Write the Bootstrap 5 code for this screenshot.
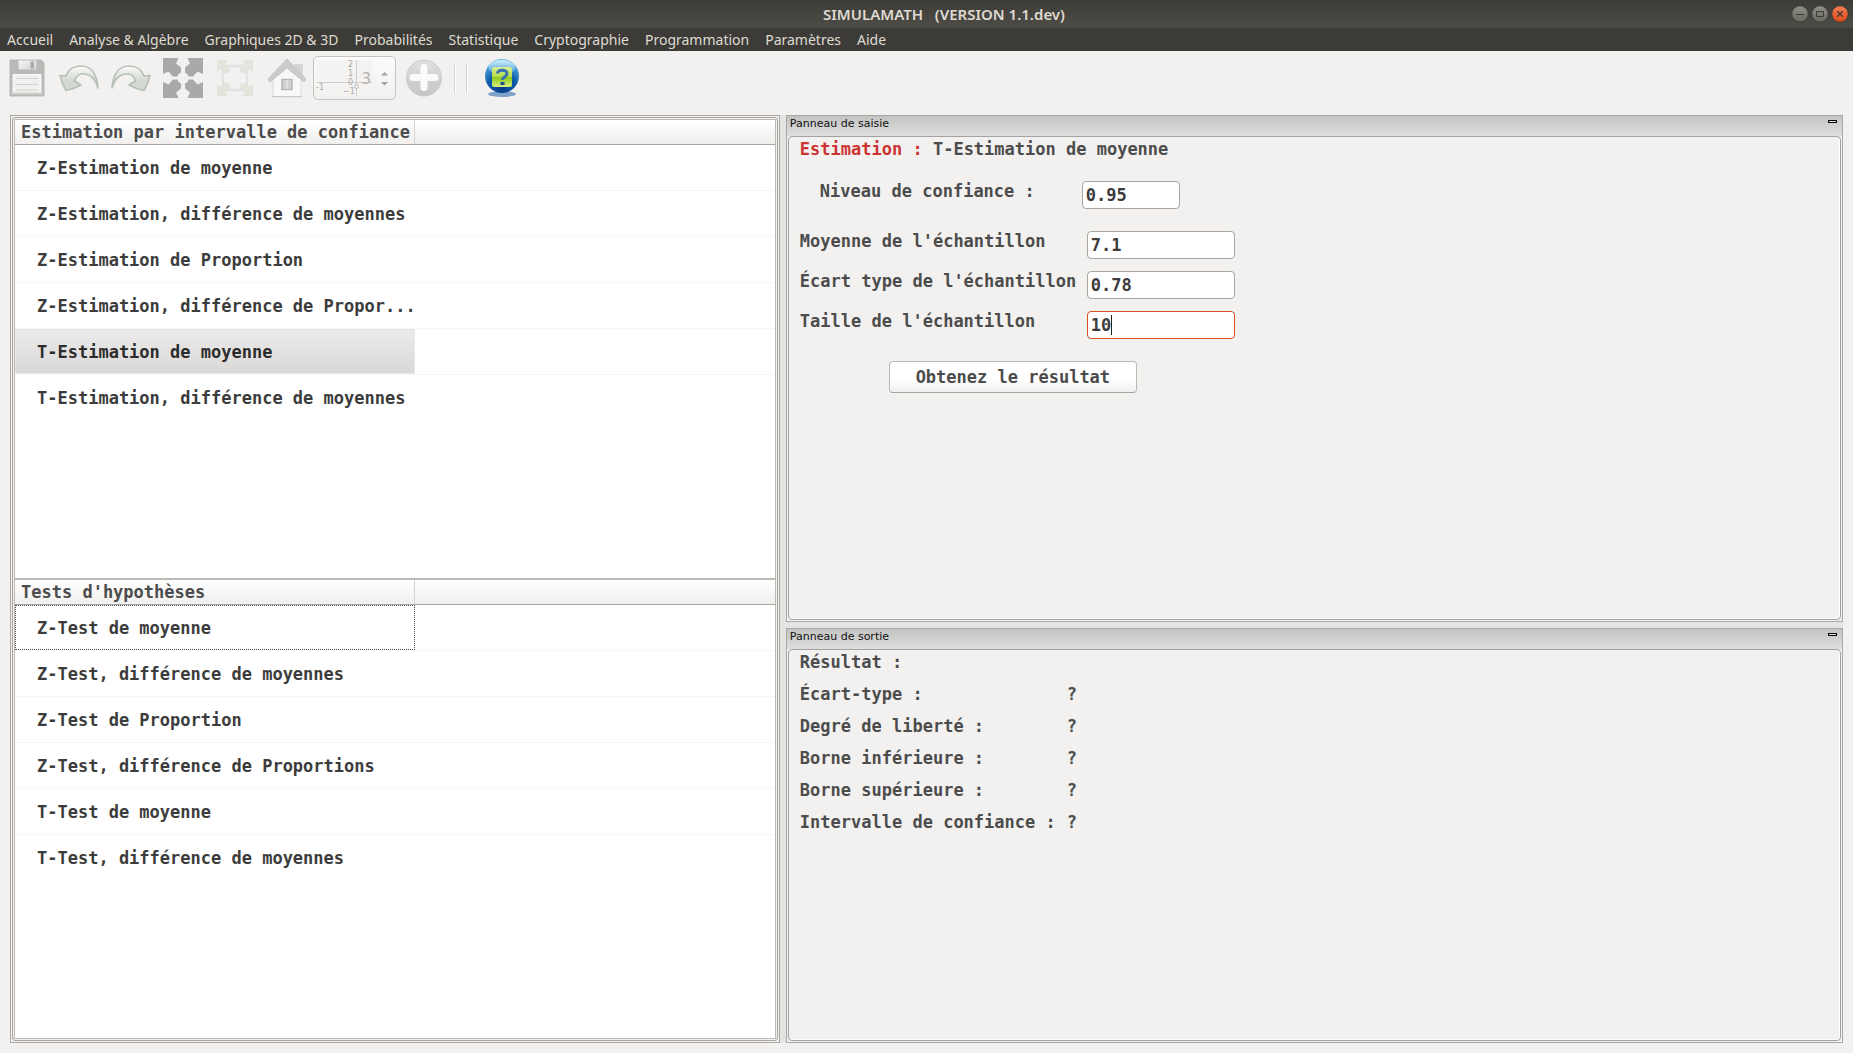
<!DOCTYPE html>
<html lang="fr">
<head>
<meta charset="utf-8">
<meta name="viewport" content="width=device-width, initial-scale=1">
<title>SIMULAMATH (VERSION 1.1.dev)</title>
<link href="https://cdn.jsdelivr.net/npm/bootstrap@5.3.0/dist/css/bootstrap.min.css" rel="stylesheet">
<style>
  body { background: #f2f1f0; color: #4c4c4c; font: bold 17px/20px "DejaVu Sans Mono", monospace; }
  .titlebar { height: 28px; padding: 0 5px 0 108px; background: linear-gradient(#3c3b37, #4d4c46); color: #dfdbd2; border-bottom: 1px solid #47463f; }
  .app-title { font: 600 15px/24px "Noto Sans", sans-serif; white-space: pre; padding-right: 12px; }
  .win-btn { width: 16px; height: 16px; border: 0; padding: 0; background: none; display: block; }
  .win-btn svg, .tool svg { display: block; overflow: visible; }
  .menubar { min-height: 23px; padding: 0 7px; background: #3c3b37; column-gap: 16px; }
  .menubar .nav-link { padding: 0; color: #dfdbd2; font: 14px/23px "Noto Sans", sans-serif; }
  .tools { min-height: 54px; padding-left: 1px; }
  .tool { width: 52px; height: 44px; border: 0; background: none; padding: 0; display: flex; align-items: center; justify-content: center; }
  .precision { width: 83px; height: 44px; margin-right: 2px; border: 1px solid #c6c4c1; border-radius: 5px; background: linear-gradient(#fbfbfb, #f1f0ef); position: relative; }
  .precision svg { position: absolute; inset: 0; }
  .precision input { position: relative; width: 60px; height: 42px; padding: 0 3px 0 0; border: 0; background: none; text-align: right; color: #b3b0ad; font: 16px/20px "Noto Sans", sans-serif; appearance: textfield; -moz-appearance: textfield; opacity: 1; }
  .precision input::-webkit-inner-spin-button { appearance: none; -webkit-appearance: none; margin: 0; }
  .tool-sep { width: 2px; height: 30px; margin-left: 10px; background: linear-gradient(90deg, #d6d4d2 50%, #fff 50%); }
  .workspace { padding: 10px; }
  .split { background: #e4e4e3; gap: 6px; }
  .side { flex: 0 0 42%; border: 1px solid #a9a8a6; padding: 1px; background: #f2f1f0; }
  .side-in { border: 1px solid #a9a6a2; border-radius: 3px; padding: 1px; }
  .tree { flex: 1 1 0; border: 1px solid #bfb9b4; background: #fff; min-height: 0; }
  .tree-head { background: linear-gradient(#fff, #f0efee); border-bottom: 1px solid #a9a6a2; }
  .tree-head h2 { width: 400px; max-width: 100%; margin: 0; padding: 2px 0 2px 6px; font: inherit; border-right: 1px solid #d5d3d1; }
  .tree .list-group-item { padding: 0; border: 0; border-bottom: 1px solid #f6f6f6; background: #fff; border-radius: 0; }
  .tree-row { display: block; width: 400px; max-width: 100%; height: 45px; padding: 0 0 0 21px; border: 1px dotted transparent; background: none; text-align: left; white-space: nowrap; font: inherit; color: #3c3c3c; }
  .tree-row.selected { background: linear-gradient(#ecebea, #dad8d6); border-color: #efeeed; color: #2c2c2c; }
  .tree-row.focused { border-color: #4c4c4c; }
  .dock { border: 1px solid #a9a8a6; background: #f2f1f0; padding: 0 1px 1px; min-height: 0; }
  .dock-in-55 { flex: 55 1 0; }
  .dock-in-45 { flex: 45 1 0; }
  .dock-head { height: 20px; margin: 0 -1px; padding: 0 5px 0 3px; background: linear-gradient(#c3c3c1, #dededd); }
  .dock-head h2 { margin: 0; font: 11px/16px "DejaVu Sans", sans-serif; color: #111; }
  .fold { width: 9px; height: 3px; margin-top: 4px; padding: 0; border: 1px solid #000; background: #ddd; }
  .dock-body { flex: 1; border: 1px solid #a3a2a0; border-radius: 4px; box-shadow: inset -1px -1px #fff; padding: 2px 11px; }
  .red { color: #cc3333; }
  .frow { display: flex; align-items: flex-start; height: 40px; }
  .frow label { width: 287px; }
  .frow .form-control { flex: none; width: 148px; height: 28px; padding: 0 4px 0 3px; border: 1px solid #a9a6a2; border-radius: 4px; font: inherit; color: #3c3c3c; background-color: #fff; }
  .level { height: 50px; margin-top: 22px; padding-left: 20px; }
  .level label { width: 262px; }
  .level .form-control { width: 98px; }
  .frow .form-control.active-field { border-color: #d9501f; background: linear-gradient(#222, #222) 23px 3px / 1px 20px no-repeat #fff; }
  .go { display: block; width: 248px; height: 32px; margin: 10px 0 0 89px; padding: 0; border: 1px solid #bbb9b6; border-bottom-color: #a5a3a0; border-radius: 4px; background: linear-gradient(#fff 60%, #f0efee); color: #4c4c4c; font: inherit; }
  .results { display: grid; grid-template-columns: 267px auto; justify-content: start; row-gap: 12px; margin: 12px 0 0; }
  .results dt, .results dd { margin: 0; font-weight: bold; }
</style>
<script src="https://cdn.jsdelivr.net/npm/bootstrap@5.3.0/dist/js/bootstrap.bundle.min.js"></script>
</head>
<body class="min-vh-100 d-flex flex-column">
<header>
  <div class="titlebar d-flex align-items-center">
    <div class="app-title flex-grow-1 text-center">SIMULAMATH   (VERSION 1.1.dev)</div>
    <div class="d-flex gap-1">
      <button class="win-btn" aria-label="Réduire"><svg width="16" height="16" viewBox="0 0 16 16"><defs><linearGradient id="g1" x2="0" y2="1"><stop stop-color="#92918a"/><stop offset="1" stop-color="#65645d"/></linearGradient><linearGradient id="g2" x2="0" y2="1"><stop stop-color="#f37e58"/><stop offset="1" stop-color="#dd4814"/></linearGradient></defs><circle cx="8" cy="8" r="8.2" fill="url(#g1)" stroke="#33322e" stroke-width=".7"/><path d="M4 8.5h8" stroke="#3c3b37"/></svg></button>
      <button class="win-btn" aria-label="Agrandir"><svg width="16" height="16" viewBox="0 0 16 16"><circle cx="8" cy="8" r="8.2" fill="url(#g1)" stroke="#33322e" stroke-width=".7"/><path d="M4.500 5.500h7v5h-7z" fill="none" stroke="#3c3b37"/></svg></button>
      <button class="win-btn" aria-label="Fermer"><svg width="16" height="16" viewBox="0 0 16 16"><circle cx="8" cy="8" r="8.200" fill="url(#g2)" stroke="#33322e" stroke-width=".7"/><path d="M5.200 5.200l5.600 5.600M10.800 5.200l-5.600 5.600" stroke="#3c3b37" stroke-width="1.300"/></svg></button>
    </div>
  </div>
  <nav class="menubar nav" aria-label="Menu principal">
    <a class="nav-link" href="#">Accueil</a>
    <a class="nav-link" href="#">Analyse &amp; Algèbre</a>
    <a class="nav-link" href="#">Graphiques 2D &amp; 3D</a>
    <a class="nav-link" href="#">Probabilités</a>
    <a class="nav-link" href="#">Statistique</a>
    <a class="nav-link" href="#">Cryptographie</a>
    <a class="nav-link" href="#">Programmation</a>
    <a class="nav-link" href="#">Paramètres</a>
    <a class="nav-link" href="#">Aide</a>
  </nav>
  <div class="tools d-flex align-items-center" role="toolbar" aria-label="Outils">
    <button class="tool" aria-label="Enregistrer"><svg width="36" height="38" viewBox="0 0 36 38"><defs><linearGradient id="sv" x2="1" y2="1"><stop stop-color="#f4f4f3"/><stop offset="1" stop-color="#d6d6d4"/></linearGradient></defs><path d="M1 1h31l3 3v33H1z" fill="#b9b9b7" stroke="#adadab" stroke-width=".8"/><path d="M9.500 1.500h18v9h-18z" fill="url(#sv)"/><path d="M21.500 2.500h3.500v7h-3.500z" fill="#aaaaa8"/><path d="M4 15.500h28v18H4z" fill="#f0f0ef" stroke="#fafafa"/><path d="M7 19.500h22M7 25.500h22M7 31h22" stroke="#d2d2d0"/><path d="M2 34.500h32" stroke="#d3cecd" stroke-width="2"/></svg></button>
    <button class="tool" aria-label="Annuler"><svg width="40" height="28" viewBox="0 0 40 28"><defs><linearGradient id="un" x2="0" y2="1"><stop stop-color="#fafbfa"/><stop offset=".6" stop-color="#d2dad1"/></linearGradient></defs><path d="M39 24C38 10 32 2 22 2 14 2 9 6 7 12L1 11.500Q3 20 7 26.500 15 25 22 21L15.500 17C17 12 21 9 26 10 33 11 37 17 39 24z" fill="url(#un)" stroke="#b7bdb7" stroke-width="1.600" stroke-linejoin="round"/></svg></button>
    <button class="tool" aria-label="Rétablir"><svg width="40" height="28" viewBox="0 0 40 28"><path transform="matrix(-1 0 0 1 40 0)" d="M39 24C38 10 32 2 22 2 14 2 9 6 7 12L1 11.500Q3 20 7 26.500 15 25 22 21L15.500 17C17 12 21 9 26 10 33 11 37 17 39 24z" fill="url(#un)" stroke="#b7bdb7" stroke-width="1.600" stroke-linejoin="round"/></svg></button>
    <button class="tool" aria-label="Plein écran"><svg width="40" height="40" viewBox="0 0 40 40"><defs><path id="corner" d="M0 0H15.500L13 5.500 18 9.500V14.500L15.500 16 14.500 18.500H10L5.500 13.500 0 16z"/></defs><g fill="#a9a9a8"><use href="#corner"/><use href="#corner" transform="matrix(-1 0 0 1 40 0)"/><use href="#corner" transform="matrix(1 0 0 -1 0 40)"/><use href="#corner" transform="matrix(-1 0 0 -1 40 40)"/></g></svg></button>
    <button class="tool" aria-label="Ajuster"><svg width="36" height="38" viewBox="0 0 36 38"><path d="M6 7h24v24H6z" fill="none" stroke="#e2e1e3" stroke-width="2.500"/><g fill="#e4e3dc"><g id="fit"><path d="M0 1h11L8 5l5 3.500v4L10 14H7L4 9.500 0 13z"/><path d="M36 1H25l3 4-5 3.500v4l3 1.500h3l3-4.500 4 3.500z"/></g><use href="#fit" transform="matrix(1 0 0 -1 0 38)"/></g></svg></button>
    <button class="tool" aria-label="Vue initiale"><svg width="40" height="40" viewBox="0 0 40 40"><path d="M27 6h9v13l-9-7z" fill="#d6d6d5"/><path d="M6 19L20 7l14 13v19H6z" fill="#f8f8f8" stroke="#dadad9"/><path d="M5 38.500h30" stroke="#cacac9"/><path d="M20 1L1 21l2 3L20 10l17 14 2-3z" fill="#cbcbca" stroke="#bfbfbe" stroke-width=".8"/><path d="M15 21.500h10v10h-10z" fill="#d0d1d3" stroke="#b7b8ba" stroke-width="1.500"/><path d="M20 22v9" stroke="#eee"/></svg></button>
    <div class="precision">
      <svg width="81" height="42" viewBox="0 0 81 42" aria-hidden="true"><path d="M3 3h55v36H3z" fill="#f4f3f2"/><path d="M42.500 3v36M3 25.500h55" stroke="#cfcdcb"/><circle cx="42.500" cy="29.500" r="2" fill="#f4f3f2" stroke="#bcbab8"/><g fill="#aaa8a6" font-family="DejaVu Sans" font-size="8" font-weight="400"><text x="34" y="10">2</text><text x="34" y="19">1</text><text x="34" y="28">0</text><text x="2" y="33">-1</text><text x="29" y="37">−1</text></g><path d="M67 18.500l3.500-3.500 3.500 3.500zM67 25l3.500 3.500L74 25z" fill="#a3a19f"/></svg>
      <input type="number" value="3" aria-label="Nombre de décimales">
    </div>
    <button class="tool" aria-label="Ajouter"><svg width="36" height="38" viewBox="0 0 36 38"><defs><linearGradient id="pl" x2="0" y2="1"><stop stop-color="#e0e1df"/><stop offset="1" stop-color="#c3c6c2"/></linearGradient></defs><ellipse cx="18" cy="19" rx="17.500" ry="18" fill="url(#pl)" stroke="#cbcdca"/><path d="M18 8.500v20M7 18.500h22" stroke="#fbfbfb" stroke-width="7" stroke-linecap="round"/></svg></button>
    <span class="tool-sep ms-1"></span><span class="tool-sep"></span>
    <button class="tool ms-2" aria-label="Aide"><svg width="36" height="40" viewBox="0 0 36 40"><defs><radialGradient id="hb" cx=".5" cy=".85" r=".9"><stop stop-color="#0a3a86"/><stop offset=".45" stop-color="#0c58a8"/><stop offset="1" stop-color="#6cc4f0"/></radialGradient><linearGradient id="hg" x2="0" y2="1"><stop stop-color="#d8ef96"/><stop offset=".48" stop-color="#b6e04c"/><stop offset=".52" stop-color="#8ccb1e"/><stop offset="1" stop-color="#d9f07a"/></linearGradient><linearGradient id="hs" x2="0" y2="1"><stop stop-color="#d4effc"/><stop offset="1" stop-color="#7cc8f0" stop-opacity=".3"/></linearGradient></defs><ellipse cx="18" cy="36" rx="14" ry="3" fill="#4d7db8" opacity=".7"/><circle cx="18" cy="18" r="17" fill="url(#hb)"/><ellipse cx="18" cy="9.500" rx="13.500" ry="7.500" fill="url(#hs)"/><rect x="8" y="9" width="20" height="20" rx="2" fill="url(#hg)"/><path d="M13.500 15.500c.3-4.500 9.500-4.500 9.500 0 0 3-4.500 3.500-4.500 6.500" fill="none" stroke="#3a6fb0" stroke-width="3"/><path d="M16.500 24h4v3h-4z" fill="#1c4f96"/></svg></button>
  </div>
</header>
<main class="workspace flex-grow-1 d-flex">
  <div class="split d-flex flex-grow-1">
    <aside class="side d-flex">
      <div class="side-in flex-grow-1 d-flex flex-column">
        <section class="tree">
          <div class="tree-head"><h2>Estimation par intervalle de confiance</h2></div>
          <ul class="list-group list-group-flush">
            <li class="list-group-item"><button class="tree-row">Z-Estimation de moyenne</button></li>
            <li class="list-group-item"><button class="tree-row">Z-Estimation, différence de moyennes</button></li>
            <li class="list-group-item"><button class="tree-row">Z-Estimation de Proportion</button></li>
            <li class="list-group-item"><button class="tree-row">Z-Estimation, différence de Propor...</button></li>
            <li class="list-group-item"><button class="tree-row selected">T-Estimation de moyenne</button></li>
            <li class="list-group-item"><button class="tree-row">T-Estimation, différence de moyennes</button></li>
          </ul>
        </section>
        <section class="tree">
          <div class="tree-head"><h2>Tests d'hypothèses</h2></div>
          <ul class="list-group list-group-flush">
            <li class="list-group-item"><button class="tree-row focused">Z-Test de moyenne</button></li>
            <li class="list-group-item"><button class="tree-row">Z-Test, différence de moyennes</button></li>
            <li class="list-group-item"><button class="tree-row">Z-Test de Proportion</button></li>
            <li class="list-group-item"><button class="tree-row">Z-Test, différence de Proportions</button></li>
            <li class="list-group-item"><button class="tree-row">T-Test de moyenne</button></li>
            <li class="list-group-item"><button class="tree-row">T-Test, différence de moyennes</button></li>
          </ul>
        </section>
      </div>
    </aside>
    <div class="flex-grow-1 d-flex flex-column split">
      <section class="dock dock-in-55 d-flex flex-column">
        <div class="dock-head d-flex justify-content-between align-items-start"><h2>Panneau de saisie</h2><button class="fold" aria-label="Replier le panneau de saisie"></button></div>
        <form class="dock-body">
          <div><span class="red">Estimation :</span> T-Estimation de moyenne</div>
          <div class="frow level"><label for="f-level">Niveau de confiance :</label><input class="form-control" id="f-level" value="0.95"></div>
          <div class="frow"><label for="f-mean">Moyenne de l'échantillon</label><input class="form-control" id="f-mean" value="7.1"></div>
          <div class="frow"><label for="f-sd">Écart type de l'échantillon</label><input class="form-control" id="f-sd" value="0.78"></div>
          <div class="frow"><label for="f-size">Taille de l'échantillon</label><input class="form-control active-field" id="f-size" value="10"></div>
          <button type="button" class="go">Obtenez le résultat</button>
        </form>
      </section>
      <section class="dock dock-in-45 d-flex flex-column">
        <div class="dock-head d-flex justify-content-between align-items-start"><h2>Panneau de sortie</h2><button class="fold" aria-label="Replier le panneau de sortie"></button></div>
        <div class="dock-body">
          <div>Résultat :</div>
          <dl class="results">
            <dt>Écart-type :</dt><dd>?</dd>
            <dt>Degré de liberté :</dt><dd>?</dd>
            <dt>Borne inférieure :</dt><dd>?</dd>
            <dt>Borne supérieure :</dt><dd>?</dd>
            <dt>Intervalle de confiance :</dt><dd>?</dd>
          </dl>
        </div>
      </section>
    </div>
  </div>
</main>
</body>
</html>
